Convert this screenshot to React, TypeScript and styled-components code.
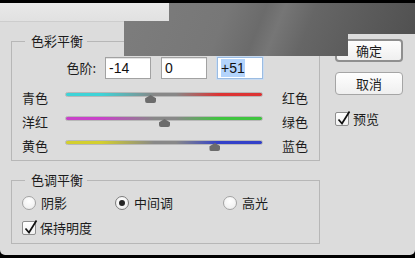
import * as React from "react"
import styled, { createGlobalStyle } from "styled-components"

const GlobalStyle = createGlobalStyle`
  html, body {
    margin: 0;
    padding: 0;
    background: #000;
  }
  body {
    width: 415px;
    height: 258px;
    overflow: hidden;
    font-family: "Noto Sans CJK SC", "Liberation Sans", sans-serif;
    color: #1c1c1c;
  }
`

const Screen = styled.div`
  position: relative;
  width: 415px;
  height: 258px;
  padding-top: 3px;
  box-sizing: border-box;
  background: #000;
`

const Dialog = styled.div`
  height: 252px;
  background: #dcdcdc;
  border-radius: 0 0 5px 5px;
  display: flex;
  flex-direction: column;
  overflow: hidden;
`

const TitleStrip = styled.div`
  flex: none;
  height: 18px;
  background: linear-gradient(#e9e9e9, #e1e1e1);
  border-bottom: 1px solid #cdcdcd;
`

const Body = styled.div`
  display: grid;
  grid-template-columns: 309px 68px;
  column-gap: 15px;
  padding-left: 11px;
  align-items: start;
`

const LeftColumn = styled.div`
  display: flex;
  flex-direction: column;
`

const Group = styled.fieldset<{ $pad: string }>`
  margin: 11px 0 0;
  padding: ${p => p.$pad};
  border: 1px solid #b7b7b7;
  min-width: 0;
`

// legend sits at the fieldset's padding edge (x 22), so a small nudge lands the text at x 31
const GroupTitle = styled.legend`
  padding: 0 4px 0 6px;
  margin-left: 3px;
  font-size: 13px;
  line-height: 16px;
`

const LevelsRow = styled.div`
  display: flex;
  justify-content: flex-end;
  align-items: center;
  gap: 10px;
  width: 241px;
  height: 22px;
  margin-bottom: 7px;
`

const LevelsLabel = styled.span`
  font-size: 13px;
  line-height: 16px;
  margin-right: -1px;
`

const Field = styled.div<{ $focused?: boolean }>`
  width: 46px;
  height: 22px;
  box-sizing: border-box;
  padding-left: 3px;
  background: #fff;
  border: 1px solid ${p => (p.$focused ? "#9bbce2" : "#a2a2a2")};
  box-shadow: ${p => (p.$focused ? "0 0 0 1px #c9dbf0" : "inset 0 1px 0 #e4e4e4")};
  font: 14px "Liberation Sans", Arial, sans-serif;
  line-height: 20px;
  color: #111;
`

const Selection = styled.span`
  background: #b3d4fc;
  padding: 1px 0;
`

const SliderRow = styled.div`
  display: grid;
  grid-template-columns: 43px 198px 19px 25px;
  height: 24px;
  align-items: center;
`

const SideLabel = styled.span<{ $col: number }>`
  grid-column: ${p => p.$col};
  font-size: 13px;
  line-height: 16px;
  white-space: nowrap;
`

const TrackArea = styled.div`
  grid-column: 2;
  position: relative;
  height: 24px;
`

const Track = styled.div<{ $from: string; $to: string }>`
  position: absolute;
  left: 0;
  right: 0;
  top: 6px;
  height: 5px;
  box-sizing: border-box;
  border-radius: 3px;
  border: 1px solid #b8b8b8;
  background: linear-gradient(
    to right,
    ${p => p.$from} 0%,
    ${p => p.$from} 18%,
    #888 45%,
    #888 56%,
    ${p => p.$to} 78%,
    ${p => p.$to} 100%
  );
`

const Thumb = styled.div`
  position: absolute;
  top: 9px;
  width: 11px;
  height: 8px;
  margin-left: -5px;
  background: #6c6c6c;
  clip-path: polygon(50% 0, 100% 40%, 100% 100%, 0 100%, 0 40%);
  border-radius: 0 0 2px 2px;
`

const ToneRow = styled.div`
  display: grid;
  grid-template-columns: 93px 108px auto;
  height: 16px;
  align-items: center;
`

const Option = styled.label<{ $gap?: number }>`
  display: flex;
  align-items: center;
  gap: ${p => p.$gap ?? 5}px;
  font-size: 13px;
  line-height: 16px;
  white-space: nowrap;
`

const Radio = styled.span<{ $checked?: boolean }>`
  width: 14px;
  height: 14px;
  box-sizing: border-box;
  border-radius: 50%;
  border: 1px solid ${p => (p.$checked ? "#7c7c7c" : "#a3a3a3")};
  background: radial-gradient(circle at 50% 35%, #ffffff, #ebebeb);
  display: inline-flex;
  align-items: center;
  justify-content: center;
  &::after {
    content: "";
    display: ${p => (p.$checked ? "block" : "none")};
    width: 6px;
    height: 6px;
    border-radius: 50%;
    background: #262626;
  }
`

const CheckRow = styled.div`
  margin-top: 9px;
  height: 16px;
  display: flex;
  align-items: center;
`

const Box = styled.span`
  position: relative;
  width: 14px;
  height: 14px;
  box-sizing: border-box;
  border: 1px solid #8e8e8e;
  border-radius: 2px;
  background: linear-gradient(#ffffff, #f1f1f1);
  svg {
    position: absolute;
    left: 1px;
    top: -3px;
  }
`

const RightColumn = styled.div`
  display: flex;
  flex-direction: column;
  padding-top: 17px;
`

const Button = styled.div<{ $primary?: boolean }>`
  height: 23px;
  box-sizing: border-box;
  border: ${p => (p.$primary ? "2px solid #8f8f8f" : "1px solid #a5a5a5")};
  border-radius: 4px;
  background: linear-gradient(#fefefe, #efefef);
  display: flex;
  align-items: center;
  justify-content: center;
  font-size: 13px;
  line-height: 16px;
  & + & {
    margin-top: 10px;
  }
`

const PreviewRow = styled.div`
  margin-top: 16px;
`

const Shade = styled.div`
  position: absolute;
  left: 124px;
  top: 3px;
  width: 291px;
  height: 53px;
  clip-path: polygon(45px 0, 291px 0, 291px 31px, 224px 31px, 224px 53px, 0 53px, 0 18px, 45px 18px);
  background: linear-gradient(
    112deg,
    #7d7d7d 0%,
    #777 34%,
    #6b6b6b 46%,
    #767676 52%,
    #666 62%,
    #5c5c5c 78%,
    #4f4f4f 100%
  );
`

const sliders = [
  { left: "青色", right: "红色", from: "#3fd3d7", to: "#dc3434", value: -14 },
  { left: "洋红", right: "绿色", from: "#c942c9", to: "#3fc43f", value: 0 },
  { left: "黄色", right: "蓝色", from: "#d3cf2e", to: "#3341c9", value: 51 },
]

const Check = () => (
  <svg width="14" height="16" viewBox="0 0 14 16">
    <path d="M1.5 9.5 L5 13.5 L12.5 1.5" fill="none" stroke="#111" strokeWidth="1.7" />
  </svg>
)

const CheckOption = ({ text }: { text: string }) => (
  <Option $gap={4}>
    <Box>
      <Check />
    </Box>
    {text}
  </Option>
)

const App: React.FunctionComponent = () => {
  return (
    <Screen>
      <GlobalStyle />
      <Dialog>
        <TitleStrip />
        <Body>
          <LeftColumn>
            <Group $pad="8px 10px 2px">
              <GroupTitle>色彩平衡</GroupTitle>
              <LevelsRow>
                <LevelsLabel>色阶:</LevelsLabel>
                <Field>-14</Field>
                <Field>0</Field>
                <Field $focused>
                  <Selection>+51</Selection>
                </Field>
              </LevelsRow>
              {sliders.map(s => (
                <SliderRow key={s.left}>
                  <SideLabel $col={1}>{s.left}</SideLabel>
                  <TrackArea>
                    <Track $from={s.from} $to={s.to} />
                    <Thumb style={{ left: `${((s.value + 100) / 200) * 100}%` }} />
                  </TrackArea>
                  <SideLabel $col={4}>{s.right}</SideLabel>
                </SliderRow>
              ))}
            </Group>
            <Group $pad="7px 10px 7px">
              <GroupTitle>色调平衡</GroupTitle>
              <ToneRow>
                <Option>
                  <Radio />
                  阴影
                </Option>
                <Option>
                  <Radio $checked />
                  中间调
                </Option>
                <Option>
                  <Radio />
                  高光
                </Option>
              </ToneRow>
              <CheckRow>
                <CheckOption text="保持明度" />
              </CheckRow>
            </Group>
          </LeftColumn>
          <RightColumn>
            <Button $primary>确定</Button>
            <Button>取消</Button>
            <PreviewRow>
              <CheckOption text="预览" />
            </PreviewRow>
          </RightColumn>
        </Body>
      </Dialog>
      <Shade />
    </Screen>
  )
}

export default App
